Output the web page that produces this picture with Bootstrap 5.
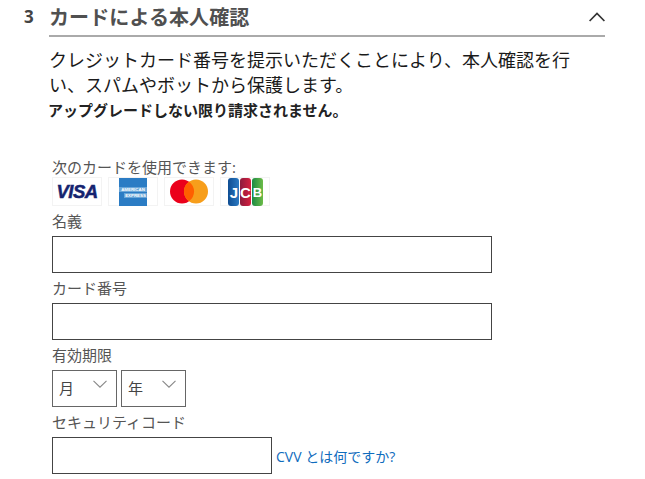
<!DOCTYPE html>
<html lang="ja">
<head>
<meta charset="utf-8">
<title>カードによる本人確認</title>
<link href="https://cdn.jsdelivr.net/npm/bootstrap@5.3.0/dist/css/bootstrap.min.css" rel="stylesheet">
<style>
html,body{height:479px;overflow:hidden;background:#fff}
body{font-family:"Open Sans","Noto Sans CJK JP",sans-serif;color:#111;padding:0 40px 0 24px}
.step-no{width:25px;font-size:17px;font-weight:700;color:#444;line-height:33px}
.step-head{border-bottom:2px solid #aaa;height:37px}
.step-title{font-size:20px;font-weight:700;color:#505050;line-height:33px;margin:0;font-family:"Noto Sans CJK JP",sans-serif;letter-spacing:.1px}
.step-chev{margin-top:12px}
.step-body{padding-left:25px}
.intro{font-size:18px;line-height:25px;width:530px;margin:11px 0 0;color:#1a1a1a}
.notice{font-size:15px;font-weight:700;line-height:20px;margin:2px 0 0 -1px;color:#222}
.form-area{padding:37px 0 0 3px}
.lbl{display:block;font-size:15px;line-height:20px;color:#555;margin:0}
.pay-row{gap:6px;margin:0 0 5px}
.pay-card{width:50px;height:29px;border:1px solid #f3f3f3;background:#fff}
.fld{display:block;height:37px;border:1px solid #444;background:#fff;border-radius:0;padding:0 6px}
.fld-wide{width:440px;margin:5px 0 5px}
.fld-cvv{width:220px}
.sel{width:65px;height:37px;border:1px solid #666;font-size:15px;color:#444;padding:0 9px 0 6px;margin:5px 0 5px}
.sel-chev{margin:0 0 9px}
.cvv-row{margin-top:5px;gap:4px}
.cvv-link{font-size:14px;color:#0f6cbd;text-decoration:none;margin-top:9px}
</style>
</head>
<body>
<div class="d-flex">
  <div class="step-no">3</div>
  <div class="flex-grow-1 step-head d-flex justify-content-between align-items-start">
    <h2 class="step-title">カードによる本人確認</h2>
    <svg class="step-chev" width="16" height="10" viewBox="0 0 16 10" fill="none" stroke="#333" stroke-width="1.7"><path d="M.6 9L8 1.5 15.4 9"/></svg>
  </div>
</div>
<div class="step-body">
  <p class="intro">クレジットカード番号を提示いただくことにより、本人確認を行い、スパムやボットから保護します。</p>
  <p class="notice">アップグレードしない限り請求されません。</p>
  <div class="form-area">
    <span class="lbl">次のカードを使用できます:</span>
    <div class="d-flex pay-row">
      <div class="pay-card d-flex align-items-center justify-content-center">
        <svg width="46" height="27" viewBox="0 0 46 27"><text x="23" y="20" text-anchor="middle" font-family="Liberation Sans" font-size="18.5" font-weight="700" font-style="italic" fill="#14236f" stroke="#14236f" stroke-width=".5" letter-spacing="-.5">VISA</text></svg>
      </div>
      <div class="pay-card d-flex align-items-center justify-content-center">
        <svg width="28" height="28" viewBox="0 0 28 28"><rect width="28" height="28" fill="#2b7cc4"/><rect x="0" y="9" width="28" height="5" fill="#6aa6d8"/><rect x="5" y="15" width="23" height="5" fill="#6aa6d8"/><text x="14" y="13" text-anchor="middle" font-family="Liberation Sans" font-size="4.4" font-weight="700" fill="#fff">AMERICAN</text><text x="16.5" y="19" text-anchor="middle" font-family="Liberation Sans" font-size="4.4" font-weight="700" fill="#fff">EXPRESS</text></svg>
      </div>
      <div class="pay-card d-flex align-items-center justify-content-center">
        <svg width="38" height="25" viewBox="0 0 38 24"><circle cx="12" cy="12" r="12" fill="#eb001b"/><circle cx="26" cy="12" r="12" fill="#f79e1b"/><path d="M19 2.2a12 12 0 0 1 0 19.6a12 12 0 0 1 0-19.6z" fill="#ff5f00"/></svg>
      </div>
      <div class="pay-card d-flex align-items-center justify-content-center">
        <svg width="35" height="28" viewBox="0 0 35 28">
          <defs>
            <linearGradient id="gj" x1="0" x2="1" y1="0" y2="0"><stop offset="0" stop-color="#0f4d92"/><stop offset="1" stop-color="#2a79c2"/></linearGradient>
            <linearGradient id="gc" x1="0" x2="1" y1="0" y2="0"><stop offset="0" stop-color="#8d1b3d"/><stop offset="1" stop-color="#d71f3f"/></linearGradient>
            <linearGradient id="gb" x1="0" x2="1" y1="0" y2="0"><stop offset="0" stop-color="#1b8a44"/><stop offset="1" stop-color="#6cbb47"/></linearGradient>
          </defs>
          <rect x="0" y="0" width="11" height="28" rx="3" fill="url(#gj)"/><rect x="12" y="0" width="11" height="28" rx="3" fill="url(#gc)"/><rect x="24" y="0" width="11" height="28" rx="3" fill="url(#gb)"/>
          <text x="6" y="19.5" text-anchor="middle" font-family="Liberation Sans" font-size="15" font-weight="700" fill="#fff">J</text><text x="17.5" y="19.5" text-anchor="middle" font-family="Liberation Sans" font-size="15" font-weight="700" fill="#fff">C</text><text x="29.5" y="19" text-anchor="middle" font-family="Liberation Sans" font-size="13" font-weight="700" fill="#fff">B</text></svg>
      </div>
    </div>
    <label class="lbl" for="nm">名義</label>
    <input id="nm" class="fld fld-wide" type="text">
    <label class="lbl" for="cn">カード番号</label>
    <input id="cn" class="fld fld-wide" type="text">
    <span class="lbl">有効期限</span>
    <div class="d-flex gap-1">
      <div class="sel d-flex justify-content-between align-items-center"><span>月</span><svg width="14" height="8" viewBox="0 0 14 8" fill="none" stroke="#888" stroke-width="1.1" class="sel-chev"><path d="M.5 .8L7 7.2 13.5 .8"/></svg></div>
      <div class="sel d-flex justify-content-between align-items-center"><span>年</span><svg width="14" height="8" viewBox="0 0 14 8" fill="none" stroke="#888" stroke-width="1.1" class="sel-chev"><path d="M.5 .8L7 7.2 13.5 .8"/></svg></div>
    </div>
    <label class="lbl" for="cv">セキュリティコード</label>
    <div class="d-flex cvv-row">
      <input id="cv" class="fld fld-cvv" type="text">
      <a class="cvv-link" href="#">CVV とは何ですか?</a>
    </div>
  </div>
</div>
</body>
</html>
